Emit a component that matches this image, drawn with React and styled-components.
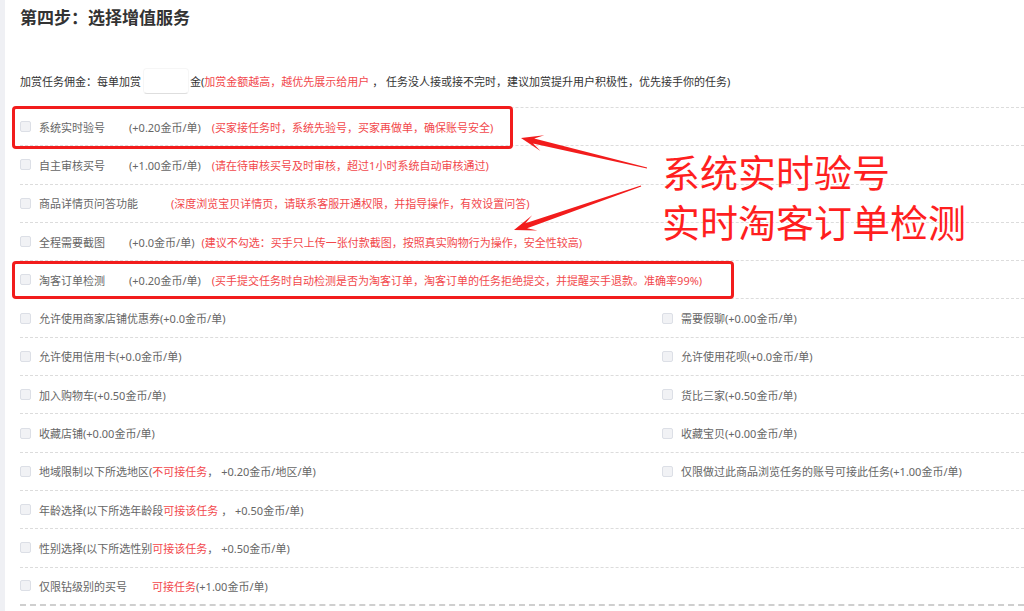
import React from 'react'
import styled, { createGlobalStyle } from 'styled-components'

const GlobalStyle = createGlobalStyle`
  html, body {
    margin: 0;
    padding: 0;
    background: #fff;
  }
  body {
    font-family: "Noto Sans", "Noto Sans CJK SC", sans-serif;
    color: #666;
  }
`

const Page = styled.div`
  position: relative;
  display: flex;
  width: 1024px;
  height: 611px;
  overflow: hidden;
`

const Strip = styled.div`
  width: 5px;
  flex: none;
  background: #eff0f4;
`

const Main = styled.div`
  flex: 1;
  padding-left: 15px;
`

const Title = styled.h2`
  margin: 0;
  padding-top: 6px;
  font-size: 17px;
  line-height: 24px;
  font-weight: bold;
  color: #333;
`

const BonusRow = styled.div`
  display: flex;
  align-items: center;
  height: 27px;
  margin-top: 37px;
  font-size: 11px;
  color: #333;
  white-space: nowrap;
`

const BonusInput = styled.div`
  width: 46px;
  height: 26px;
  margin: 0 1px 0 2px;
  box-sizing: border-box;
  border: 1px solid #f6f6f6;
  border-bottom-color: #dedede;
  border-radius: 4px;
`

const Red = styled.span`
  color: #f2484c;
`

const List = styled.div`
  margin-top: 13px;
  border-top: 1px dashed #dcdcdc;
`

const Row = styled.div`
  position: relative;
  display: grid;
  grid-template-columns: 642px 1fr;
  align-items: center;
  height: 38.3px;
  box-sizing: border-box;
  border-bottom: ${p => (p.$last ? '2px dashed #cfcfcf' : '1px dashed #dcdcdc')};
  font-size: 11px;
  white-space: nowrap;

  ${p =>
    p.$box &&
    `
    &::before {
      content: '';
      position: absolute;
      left: -8px;
      top: ${p.$box.t}px;
      bottom: ${p.$box.b}px;
      width: ${p.$box.w}px;
      box-sizing: border-box;
      border: 3px solid #f21c1c;
      border-radius: 4px;
    }
  `}
`

const Cell = styled.div`
  display: flex;
  align-items: center;
  grid-column: ${p => (p.$full ? '1 / 3' : 'auto')};
`

const Check = styled.span`
  width: 11px;
  height: 11px;
  flex: none;
  margin-right: 8px;
  box-sizing: border-box;
  border: 1px solid #dcdfe6;
  border-radius: 2px;
  background: #f1f2f5;
`

const Label = styled.span`
  min-width: ${p => (p.$w ? `${p.$w}px` : 'auto')};
`

const Desc = styled.span`
  color: #f2484c;
  margin-left: ${p => p.$ml || 0}px;
`

const Note = styled.div`
  position: absolute;
  left: 662px;
  top: 146px;
  font-family: "Noto Sans CJK SC", sans-serif;
  font-size: 38px;
  line-height: 50px;
  color: #ff1f1f;
  white-space: nowrap;
  pointer-events: none;
`

const ArrowLayer = styled.svg`
  position: absolute;
  left: 0;
  top: 0;
  pointer-events: none;
`

const arrowPoints = (tx, ty, px, py) => {
  const dx = px - tx
  const dy = py - ty
  const len = Math.hypot(dx, dy)
  const ux = dx / len
  const uy = dy / len
  const nx = -uy
  const ny = ux
  const at = (d, w) => [px - ux * d + nx * w, py - uy * d + ny * w]
  const pts = [
    [tx + nx * 0.6, ty + ny * 0.6],
    at(13, 2.6),
    at(22, 8),
    [px, py],
    at(22, -8),
    at(13, -2.6),
    [tx - nx * 0.6, ty - ny * 0.6],
  ]
  return pts.map(p => p.map(v => v.toFixed(1)).join(',')).join(' ')
}

const topRows = [
  {
    label: '系统实时验号',
    price: '(+0.20金币/单)',
    desc: '(买家接任务时，系统先验号，买家再做单，确保账号安全)',
    ml: 11,
    box: { w: 501, t: -2, b: -4 },
  },
  {
    label: '自主审核买号',
    price: '(+1.00金币/单)',
    desc: '(请在待审核买号及时审核，超过1小时系统自动审核通过)',
    ml: 11,
  },
  {
    label: '商品详情页问答功能',
    desc: '(深度浏览宝贝详情页，请联系客服开通权限，并指导操作，有效设置问答)',
    ml: 33,
  },
  {
    label: '全程需要截图',
    price: '(+0.0金币/单)',
    desc: '(建议不勾选：买手只上传一张付款截图，按照真实购物行为操作，安全性较高)',
    ml: 7,
  },
  {
    label: '淘客订单检测',
    price: '(+0.20金币/单)',
    desc: '(买手提交任务时自动检测是否为淘客订单，淘客订单的任务拒绝提交，并提醒买手退款。准确率99%)',
    ml: 11,
    box: { w: 722, t: 0, b: -1 },
  },
]

const pairRows = [
  ['允许使用商家店铺优惠券(+0.0金币/单)', '需要假聊(+0.00金币/单)'],
  ['允许使用信用卡(+0.0金币/单)', '允许使用花呗(+0.0金币/单)'],
  ['加入购物车(+0.50金币/单)', '货比三家(+0.50金币/单)'],
  ['收藏店铺(+0.00金币/单)', '收藏宝贝(+0.00金币/单)'],
  [
    <>
      地域限制以下所选地区(<Red>不可接任务</Red>， +0.20金币/地区/单)
    </>,
    '仅限做过此商品浏览任务的账号可接此任务(+1.00金币/单)',
  ],
  [
    <>
      年龄选择(以下所选年龄段<Red>可接该任务</Red> ， +0.50金币/单)
    </>,
  ],
  [
    <>
      性别选择(以下所选性别<Red>可接该任务</Red>， +0.50金币/单)
    </>,
  ],
]

export default function App() {
  return (
    <>
      <GlobalStyle />
      <Page>
        <Strip />
        <Main>
          <Title>第四步：选择增值服务</Title>
          <BonusRow>
            加赏任务佣金：每单加赏
            <BonusInput />
            金(<Red>加赏金额越高，越优先展示给用户</Red>&nbsp;，
            任务没人接或接不完时，建议加赏提升用户积极性，优先接手你的任务)
          </BonusRow>
          <List>
            {topRows.map(r => (
              <Row key={r.label} $box={r.box}>
                <Cell $full>
                  <Check />
                  <Label $w={90}>{r.label}</Label>
                  {r.price && <span>{r.price}</span>}
                  <Desc $ml={r.ml}>{r.desc}</Desc>
                </Cell>
              </Row>
            ))}
            {pairRows.map((cells, i) => (
              <Row key={i}>
                {cells.map((c, j) => (
                  <Cell key={j}>
                    <Check />
                    <span>{c}</span>
                  </Cell>
                ))}
              </Row>
            ))}
            <Row $last>
              <Cell $full>
                <Check />
                <Label>仅限钻级别的买号</Label>
                <Desc $ml={25}>可接任务</Desc>
                <span>(+1.00金币/单)</span>
              </Cell>
            </Row>
          </List>
        </Main>

        <ArrowLayer width="1024" height="611" viewBox="0 0 1024 611">
          <polygon points={arrowPoints(647, 168, 521, 138)} fill="#f21c1c" />
          <polygon points={arrowPoints(641, 186, 514, 230)} fill="#f21c1c" />
        </ArrowLayer>
        <Note>
          系统实时验号
          <br />
          实时淘客订单检测
        </Note>
      </Page>
    </>
  )
}
